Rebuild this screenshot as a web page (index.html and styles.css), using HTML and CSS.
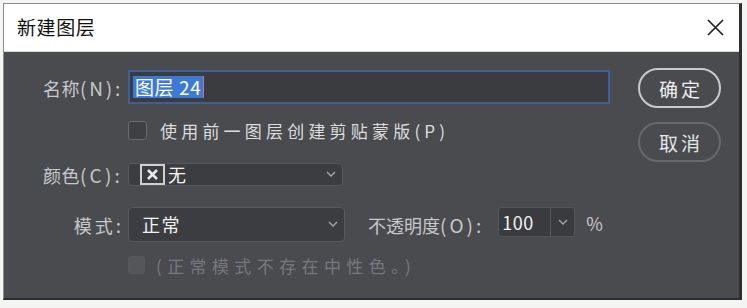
FILE: index.html
```html
<!DOCTYPE html>
<html lang="zh">
<head>
<meta charset="utf-8">
<title>新建图层</title>
<link rel="stylesheet" href="styles.css">
</head>
<body>
<div class="window">
  <div class="titlebar">
    <span class="title">新建图层</span>
    <svg class="close" width="17" height="17" viewBox="0 0 17 17"><path d="M1 1L16 16M16 1L1 16" stroke="#1e1e1e" stroke-width="1.6" fill="none"/></svg>
  </div>
  <div class="content">
    <div class="form">
      <div class="row row-name">
        <label class="label">名称<span class="en">(N):</span></label>
        <div class="text-input"><span class="sel">图层 24</span><span class="caret"></span></div>
      </div>
      <div class="row row-clip">
        <span class="spacer"></span>
        <div class="check-line"><span class="checkbox"></span><span class="check-text">使用前一图层创建剪贴蒙版(P)</span></div>
      </div>
      <div class="row row-color">
        <label class="label">颜色<span class="en en-c">(C):</span></label>
        <div class="select select-color">
          <span class="xbox"><svg width="13" height="13" viewBox="0 0 13 13"><path d="M2 2L11 11M11 2L2 11" stroke="#e8e8e8" stroke-width="2.6" fill="none"/></svg></span>
          <span class="value">无</span>
          <svg class="chev" width="10" height="6" viewBox="0 0 10 6"><path d="M1 1L5 5L9 1" stroke="#a9a9ab" stroke-width="1.3" fill="none"/></svg>
        </div>
      </div>
      <div class="row row-mode">
        <label class="label label-mode">模式<span class="en">:</span></label>
        <div class="select select-mode">
          <span class="value mode-value">正常</span>
          <svg class="chev" width="10" height="6" viewBox="0 0 10 6"><path d="M1 1L5 5L9 1" stroke="#a9a9ab" stroke-width="1.3" fill="none"/></svg>
        </div>
        <span class="opacity-label">不透明度<span class="en en-o">(O):</span></span>
        <div class="num">
          <span class="num-value">100</span>
          <span class="num-btn"><svg width="10" height="6" viewBox="0 0 10 6"><path d="M1 1L5 5L9 1" stroke="#a9a9ab" stroke-width="1.3" fill="none"/></svg></span>
        </div>
        <span class="pct">%</span>
      </div>
      <div class="row row-neutral">
        <span class="spacer"></span>
        <div class="check-line disabled"><span class="checkbox dis"></span><span class="check-text dis-text">(正常模式不存在中性色。)</span></div>
      </div>
    </div>
    <div class="buttons">
      <button class="btn btn-ok">确定</button>
      <button class="btn btn-cancel">取消</button>
    </div>
  </div>
</div>
</body>
</html>
```
FILE: styles.css
```css
* { box-sizing: border-box; }
html, body { margin: 0; padding: 0; }
body {
  background: #f4f5f2;
  width: 747px;
  height: 308px;
  padding: 3px 0 0 3px;
  font-family: "Microsoft YaHei", "Noto Sans CJK SC", "Noto Sans", sans-serif;
  overflow: hidden;
}
.window {
  width: 739px;
  height: 297px;
  border-left: 1px solid #8c8c8c;
  border-top: 1px solid #8c8c8c;
  border-right: 3px solid #2c2d2f;
  border-bottom: 2px solid #2c2d2f;
  background: #4a4b4f;
  display: flex;
  flex-direction: column;
}
.titlebar {
  height: 48px;
  background: #ffffff;
  display: flex;
  align-items: center;
  justify-content: space-between;
  padding: 0 15px 2px 13px;
  border-bottom: 1px solid #d6d6d6;
  flex: none;
}
.title {
  font-size: 19px;
  color: #111;
  letter-spacing: 0.6px;
}
.close { display: block; margin-top: 1px; }
.content {
  flex: 1;
  display: flex;
  justify-content: space-between;
  padding: 14px 18px 0 0;
}
.form {
  display: flex;
  flex-direction: column;
}
.row {
  display: flex;
  align-items: center;
  font-size: 17px;
}
.label, .spacer {
  width: 119px;
  flex: none;
  text-align: right;
  color: #c8c8ca;
  margin-right: 5px;
  white-space: nowrap;
  font-size: 18px;
  letter-spacing: 0.5px;
}
.en {
  font-size: 19px;
  letter-spacing: 2.8px;
}
.en-c { letter-spacing: 3.2px; }
.label-mode { letter-spacing: 3px; }
.label-mode .en { letter-spacing: 2px; }
.row-name { height: 42px; }
.row-clip { height: 45px; }
.row-color { height: 42px; }
.row-mode { height: 58px; }
.row-neutral { height: 24px; }

.text-input {
  width: 482px;
  height: 34px;
  background: #3b3c40;
  border: 2px solid #3c5f9e;
  display: flex;
  align-items: center;
  padding-left: 3px;
  color: #fff;
}
.sel {
  background: #3d7ad6;
  color: #fff;
  line-height: 22px;
  padding: 0 2px;
  font-size: 19px;
  letter-spacing: 0.6px;
}
.caret {
  width: 1px;
  height: 22px;
  background: #c97a6c;
}
.check-line {
  display: flex;
  align-items: center;
}
.checkbox {
  width: 19px;
  height: 19px;
  border: 1px solid #6a6b6f;
  border-radius: 3px;
  background: #3f4044;
  margin-right: 13px;
}
.check-text {
  color: #dcdcdc;
  letter-spacing: 4.2px;
}
.checkbox.dis {
  border-color: #57585c;
  background: #55565a;
  width: 17px;
  height: 18px;
  margin-right: 11px;
}
.dis-text { color: #77787c; letter-spacing: 5.4px; }

.select {
  display: flex;
  align-items: center;
  background: #3c3d41;
  border: 1px solid #58595d;
  border-radius: 4px;
  color: #f2f2f2;
}
.select-color {
  width: 215px;
  height: 23px;
  padding-left: 11px;
}
.xbox {
  width: 25px;
  height: 21px;
  border: 2px solid #d0d0d2;
  display: flex;
  align-items: center;
  justify-content: center;
  margin-right: 3px;
}
.xbox svg { display: block; }
.select .value { flex: 1; font-size: 18px; }
.mode-value { letter-spacing: 1.5px; }
.chev { margin-right: 6px; display: block; }
.select-mode {
  width: 217px;
  height: 35px;
  padding-left: 13px;
}
.opacity-label {
  color: #c8c8ca;
  margin-left: 23px;
  margin-right: 14px;
  white-space: nowrap;
  font-size: 18px;
}
.en-o { letter-spacing: 3px; }
.num {
  display: flex;
  height: 30px;
  width: 77px;
  background: #3a3b3f;
  border: 1px solid #55565a;
  border-radius: 3px;
  margin-top: -4px;
}
.num-value {
  width: 52px;
  color: #f2f2f2;
  display: flex;
  align-items: center;
  padding-left: 3px;
  font-size: 18px;
  letter-spacing: 0.5px;
  border-right: 1px solid #58595d;
}
.num-btn {
  flex: 1;
  display: flex;
  align-items: center;
  justify-content: center;
}
.pct {
  color: #c8c8ca;
  margin-left: 11px;
  font-size: 18px;
  margin-top: -3px;
}
.buttons {
  display: flex;
  flex-direction: column;
  gap: 14px;
  padding-top: 2px;
}
.btn {
  width: 83px;
  height: 40px;
  border-radius: 20px;
  background: transparent;
  font-family: inherit;
  font-size: 19px;
  color: #f0f0f0;
  padding: 0 0 0 3px;
  letter-spacing: 3px;
}
.btn-ok { border: 2px solid #c9c9cb; }
.btn-cancel { border: 2px solid #67686c; color: #e6e6e6; }
```
